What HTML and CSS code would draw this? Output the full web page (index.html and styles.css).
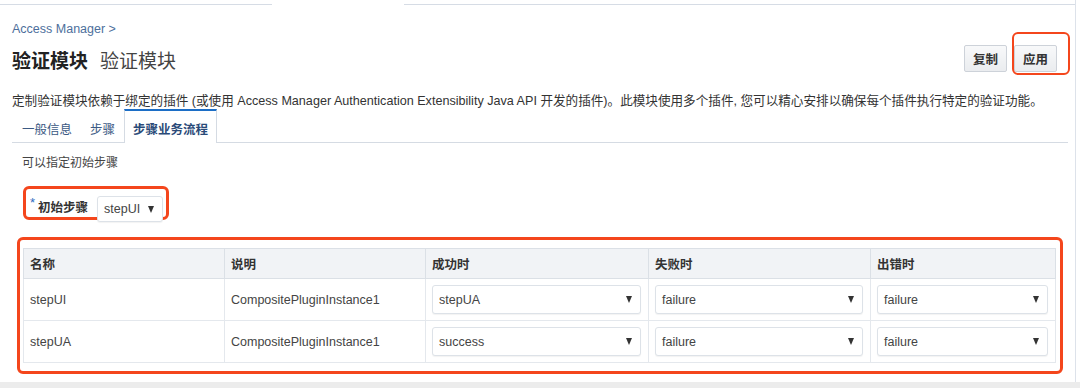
FILE: index.html
```html
<!DOCTYPE html>
<html lang="zh-CN">
<head>
    <meta charset="UTF-8">
    <title>验证模块</title>
    <link rel="stylesheet" href="styles.css">
</head>
<body>
    <!-- 主面板 -->
    <div class="panel">
        <div class="topline"><span class="seg seg-a"></span><span class="seg seg-b"></span></div>
        <div class="crumb">Access Manager &gt;</div>
        <!-- 标题和按钮 -->
        <div class="head">
            <h1 class="title"><b>验证模块</b><span class="sub">验证模块</span></h1>
            <div class="actions">
                <button class="btn">复制</button>
                <button class="btn">应用</button>
                <span class="mark mark-apply"></span>
            </div>
        </div>
        <p class="desc">定制验证模块依赖于绑定的插件 (或使用 Access Manager Authentication Extensibility Java API 开发的插件)。此模块使用多个插件, 您可以精心安排以确保每个插件执行特定的验证功能。</p>
        <!-- 选项卡 -->
        <div class="tabs">
            <span class="tab">一般信息</span>
            <span class="tab">步骤</span>
            <span class="tab on">步骤业务流程</span>
        </div>
        <div class="content">
            <p class="hint">可以指定初始步骤</p>
            <div class="init mark">
                <span class="req">*</span>
                <label class="lbl">初始步骤</label>
                <div class="sel sel-small"><span>stepUI</span><i class="caret"></i></div>
            </div>
            <!-- 步骤表格 -->
            <div class="grid-wrap mark">
                <table class="grid">
                    <colgroup>
                        <col style="width:201px"><col style="width:201px"><col style="width:223px"><col style="width:222px"><col>
                    </colgroup>
                    <thead>
                        <tr><th>名称</th><th>说明</th><th>成功时</th><th>失败时</th><th>出错时</th></tr>
                    </thead>
                    <tbody>
                        <tr>
                            <td>stepUI</td>
                            <td>CompositePluginInstance1</td>
                            <td><div class="sel"><span>stepUA</span><i class="caret"></i></div></td>
                            <td><div class="sel"><span>failure</span><i class="caret"></i></div></td>
                            <td><div class="sel"><span>failure</span><i class="caret"></i></div></td>
                        </tr>
                        <tr>
                            <td>stepUA</td>
                            <td>CompositePluginInstance1</td>
                            <td><div class="sel"><span>success</span><i class="caret"></i></div></td>
                            <td><div class="sel"><span>failure</span><i class="caret"></i></div></td>
                            <td><div class="sel"><span>failure</span><i class="caret"></i></div></td>
                        </tr>
                    </tbody>
                </table>
            </div>
        </div>
    </div>
    <div class="foot"></div>
</body>
</html>
```

FILE: styles.css
```css
body{
    margin: 0;
    background-color: #fff;
    font-family: "Liberation Sans", "Noto Sans CJK SC", sans-serif;
    color: #333;
    font-size: 12px;
}
.panel{
    width: 1076px;
    height: 382px;
    box-sizing: border-box;
    border-right: 1px solid #dde2ea;
    padding: 0 7px 0 12px;
}
.topline{
    display: flex;
    margin: 0 -7px 0 -12px;
    padding-top: 4px;
}
.seg{
    display: block;
    height: 1px;
    background-color: #d6dce5;
}
.seg-a{
    width: 272px;
}
.seg-b{
    flex: 1;
    margin-left: 132px;
}
.crumb{
    margin-top: 14px;
    line-height: 20px;
    font-size: 12.5px;
    color: #4d6f9c;
}
.head{
    display: flex;
    justify-content: space-between;
    align-items: flex-start;
    margin-top: 6px;
}
.title{
    margin: 0;
    padding-top: 3px;
    line-height: 27px;
    font-size: 19px;
    font-weight: normal;
    color: #222;
}
.title b{
    font-weight: bold;
}
.sub{
    margin-left: 12px;
    color: #444;
}
.actions{
    position: relative;
    display: flex;
    gap: 7px;
    margin-right: 11px;
}
.btn{
    height: 27px;
    padding: 0 8px;
    border: 1px solid #cdd2d9;
    border-radius: 2px;
    background: linear-gradient(#f8f9fa, #eaecef);
    font-family: "Liberation Sans", "Noto Sans CJK SC", sans-serif;
    font-size: 12.5px;
    font-weight: bold;
    color: #333;
}
.mark{
    border: 3px solid #f4461c;
    border-radius: 6px;
    box-sizing: border-box;
}
.mark-apply{
    position: absolute;
    left: 48px;
    top: -13px;
    width: 58px;
    height: 43px;
    border-width: 2.5px;
}
.desc{
    margin: 18px 0 0;
    line-height: 16px;
    font-size: 12.6px;
    color: #333;
    white-space: nowrap;
}
.tabs{
    display: flex;
    height: 34px;
    box-sizing: border-box;
    border-bottom: 1px solid #d5dbe3;
}
.tab{
    height: 34px;
    box-sizing: border-box;
    padding: 12px 9px 0;
    line-height: 18px;
    font-size: 12.5px;
    color: #3c5a84;
}
.tab:first-child{
    padding-left: 10px;
}
.tab.on{
    padding: 10px 8px 0;
    border-top: 2px solid #1c6ec6;
    border-left: 1px solid #d5dbe3;
    border-right: 1px solid #d5dbe3;
    background-color: #fff;
    font-weight: bold;
    color: #2a4a78;
}
.content{
    padding-left: 5px;
}
.hint{
    margin: 11px 0 0 5px;
    line-height: 18px;
    color: #444;
}
.init{
    display: inline-flex;
    align-items: flex-start;
    height: 34px;
    margin: 14px 0 0 6px;
    padding: 7px 3px 0 4px;
}
.req{
    line-height: 14px;
    font-size: 13px;
    color: #2c6cc0;
}
.lbl{
    margin: 3px 0 0 3px;
    line-height: 18px;
    font-size: 12.5px;
    font-weight: bold;
    color: #333;
}
.sel{
    display: flex;
    justify-content: space-between;
    align-items: center;
    height: 29px;
    box-sizing: border-box;
    padding: 0 8px 0 6px;
    border: 1px solid #dde2e8;
    border-radius: 3px;
    background-color: #fff;
    box-shadow: 0 1px 1px rgba(0,0,0,0.05);
    font-size: 12.5px;
    color: #444;
}
.sel-small{
    width: 66px;
    height: 26px;
    margin-left: 9px;
    margin-top: 0;
}
.caret{
    width: 0;
    height: 0;
    border-left: 3.5px solid transparent;
    border-right: 3.5px solid transparent;
    border-top: 7px solid #333;
}
.grid-wrap{
    margin: 17px 5px 0 0;
    padding: 8px 4px 8px 3px;
}
.grid{
    width: 100%;
    border-collapse: collapse;
    table-layout: fixed;
    border: 1px solid #d8dde4;
}
.grid th{
    height: 29px;
    padding: 0 6px;
    background-color: #f1f3f6;
    border: 1px solid #dbe0e6;
    text-align: left;
    font-size: 12.5px;
    color: #333;
}
.grid td{
    height: 41px;
    padding: 0 7px 0 6px;
    border: 1px solid #e4e8ed;
    color: #444;
    font-size: 12.5px;
}
.foot{
    height: 6px;
    background-color: #ececec;
}
```
